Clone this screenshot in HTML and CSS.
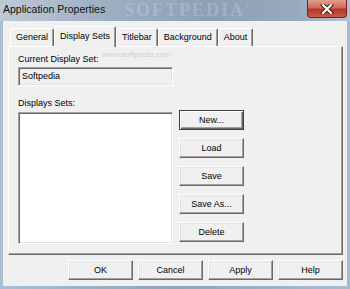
FILE: index.html
```html
<!DOCTYPE html>
<html lang="en">
<head>
  <meta charset="UTF-8" />
  <title>Application Properties</title>
  <link rel="stylesheet" href="styles.css">
</head>
<body>
  <div class="window">
    <!-- title bar -->
    <div class="titlebar">
      <span class="title">Application Properties</span>
      <span class="watermark">SOFTPEDIA<span class="reg">®</span></span>
      <div class="close-btn">
        <svg width="14" height="10" viewBox="0 0 14 10">
          <path d="M3 1 L11 9 M11 1 L3 9" stroke="#3a1010" stroke-width="4" stroke-linecap="square"/>
          <path d="M3 1 L11 9 M11 1 L3 9" stroke="#ffffff" stroke-width="2.2" stroke-linecap="square"/>
        </svg>
      </div>
    </div>

    <div class="client">
      <!-- tabs -->
      <div class="tabs">
        <div class="tab">General</div>
        <div class="tab active">Display Sets</div>
        <div class="tab">Titlebar</div>
        <div class="tab">Background</div>
        <div class="tab">About</div>
      </div>

      <!-- tab page -->
      <div class="panel">
        <span class="site-mark">www.softpedia.com</span>
        <div class="col-left">
          <div class="label">Current Display Set:</div>
          <div class="textbox">Softpedia</div>
          <div class="label label-sets">Displays Sets:</div>
          <div class="listbox"></div>
        </div>
        <div class="col-right">
          <button class="btn btn-default">New...</button>
          <button class="btn">Load</button>
          <button class="btn">Save</button>
          <button class="btn">Save As...</button>
          <button class="btn">Delete</button>
        </div>
      </div>

      <!-- dialog buttons -->
      <div class="actions">
        <button class="btn btn-wide">OK</button>
        <button class="btn btn-wide">Cancel</button>
        <button class="btn btn-wide">Apply</button>
        <button class="btn btn-wide">Help</button>
      </div>
    </div>
  </div>
</body>
</html>
```

FILE: styles.css
```css
/* page */
body {
  margin: 0;
  padding: 0;
  font-family: "Liberation Sans", Arial, sans-serif;
  background-color: #9fb3c9;
}

.window {
  width: 350px;
  height: 289px;
  display: flex;
  flex-direction: column;
  background: linear-gradient(to right, #a9bdd3 0%, #8fa5bd 50%, #a9bbcf 100%);
}

/* title bar */
.titlebar {
  position: relative;
  height: 21px;
  flex: none;
  display: flex;
  align-items: flex-start;
  background: linear-gradient(to right, #bdc9d5 0%, #9eafc2 30%, #8c9fb4 60%, #98aabd 85%, #b3c2d1 100%);
}
.title {
  margin: 3px 0 0 3px;
  font-size: 10.5px;
  color: #101010;
}
.watermark {
  position: absolute;
  left: 124px;
  top: 1px;
  font-family: "Liberation Serif", serif;
  font-weight: bold;
  font-size: 18px;
  line-height: 19px;
  letter-spacing: 2px;
  color: rgba(215, 225, 238, 0.3);
}
.watermark .reg {
  font-size: 7px;
  vertical-align: top;
  line-height: 10px;
}
.close-btn {
  margin-left: auto;
  margin-right: 3px;
  width: 38px;
  height: 17px;
  display: flex;
  align-items: center;
  justify-content: center;
  border: 1px solid #6e2420;
  border-top: none;
  border-radius: 0 0 4px 4px;
  background: linear-gradient(to bottom, #e0a090 0%, #cf6a58 45%, #b8362a 55%, #c85a48 100%);
}

/* client area */
.client {
  flex: 1;
  margin: 0 3px 3px 3px;
  background-color: #f0f0f0;
  display: flex;
  flex-direction: column;
  font-size: 9px;
  color: #000;
}

/* tabs */
.tabs {
  display: flex;
  align-items: flex-end;
  height: 25px;
  padding-left: 7px;
  position: relative;
  z-index: 1;
}
.tab {
  height: 17px;
  line-height: 17px;
  padding: 0 5px;
  border-top: 1px solid #ffffff;
  border-left: 1px solid #ffffff;
  border-right: 1px solid #696969;
  box-shadow: inset -1px 0 #a0a0a0;
  border-radius: 2px 2px 0 0;
  background-color: #f0f0f0;
  white-space: nowrap;
}
.tab.active {
  height: 20px;
  line-height: 18px;
  margin-bottom: -1px;
  padding: 0 5px;
}

/* tab page */
.panel {
  position: relative;
  margin: 0 4px 0 5px;
  height: 207px;
  display: flex;
  gap: 6px;
  padding: 0 0 0 9px;
  border: 1px solid;
  border-color: #ffffff #696969 #696969 #ffffff;
  box-shadow: inset -1px -1px #a0a0a0;
}
.site-mark {
  position: absolute;
  left: 93px;
  top: 3px;
  font-size: 8px;
  color: #cfcfcf;
}
.col-left {
  width: 155px;
  display: flex;
  flex-direction: column;
}
.label {
  margin-top: 7px;
  height: 11px;
  line-height: 11px;
}
.label-sets {
  margin-top: 12px;
}
.textbox {
  margin-top: 2px;
  height: 17px;
  line-height: 17px;
  padding-left: 3px;
  border: 1px solid;
  border-color: #a0a0a0 #ffffff #ffffff #a0a0a0;
  box-shadow: inset 1px 1px #696969, inset -1px -1px #e3e3e3;
  background-color: #f0f0f0;
}
.listbox {
  margin-top: 3px;
  height: 130px;
  border: 1px solid;
  border-color: #a0a0a0 #ffffff #ffffff #a0a0a0;
  box-shadow: inset 1px 1px #696969, inset -1px -1px #e3e3e3;
  background-color: #ffffff;
}
.col-right {
  margin-top: 63px;
  height: 132px;
  display: flex;
  flex-direction: column;
  justify-content: space-between;
}

/* buttons */
.btn {
  width: 65px;
  height: 20px;
  padding: 0;
  font-family: "Liberation Sans", Arial, sans-serif;
  font-size: 9px;
  color: #000;
  background-color: #f0f0f0;
  border: 1px solid;
  border-color: #ffffff #696969 #696969 #ffffff;
  box-shadow: inset -1px -1px #a0a0a0, inset 1px 1px #e3e3e3;
}
.btn-default {
  border-color: #404040;
  box-shadow: inset 1px 1px #ffffff, inset -1px -1px #696969, inset -2px -2px #a0a0a0;
}

/* dialog buttons */
.actions {
  display: flex;
  justify-content: flex-end;
  gap: 5px;
  margin: 5px 4px 0 0;
}
.btn-wide {
  width: 65px;
}
```
